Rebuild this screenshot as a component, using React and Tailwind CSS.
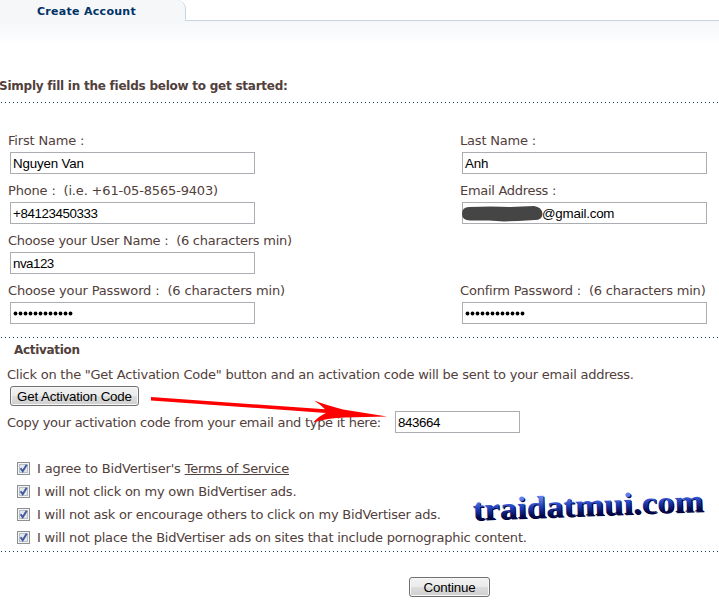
import React from 'react';

const LABEL_FONT = "font-['DejaVu_Sans',sans-serif]";

const fieldRows = [
  [
    { label: 'First Name :', value: 'Nguyen Van', tracking: 'tracking-[-0.17px]', valueTracking: 'tracking-[-0.15px]' },
    { label: 'Last Name :', value: 'Anh', tracking: 'tracking-[-0.2px]', valueTracking: 'tracking-[-0.15px]' }
  ],
  [
    { label: 'Phone :', hint: '(i.e. +61-05-8565-9403)', value: '+84123450333', tracking: 'tracking-[-0.17px]', valueTracking: 'tracking-[-0.4px]' },
    { label: 'Email Address :', value: '@gmail.com', masked: true, tracking: 'tracking-[-0.3px]', valueTracking: 'tracking-[-0.2px]' }
  ],
  [{ label: 'Choose your User Name :', hint: '(6 characters min)', value: 'nva123', tracking: 'tracking-[-0.25px]', valueTracking: 'tracking-[-0.5px]' }],
  [
    { label: 'Choose your Password :', hint: '(6 characters min)', password: true, tracking: 'tracking-[-0.15px]' },
    { label: 'Confirm Password :', hint: '(6 characters min)', password: true, tracking: 'tracking-[-0.2px]' }
  ]
];

const DottedLine = () => (
  <div className="h-px w-full bg-[repeating-linear-gradient(90deg,transparent_0_1px,#1f3a63_1px_2px,transparent_2px_4px)]" />
);

const Dots = () => (
  <svg width="62" height="20" className="block">
    {Array.from({ length: 12 }, (_, i) => (
      <circle key={i} cx={4.5 + i * 5} cy="10.5" r="1.9" fill="#000" />
    ))}
  </svg>
);

const Field = ({ label, hint, value, masked, password, tracking, valueTracking }) => (
  <div className="h-[50px] w-[452px] shrink-0">
    <div className={`h-[21px] whitespace-pre text-[13px] leading-[20px] ${tracking}`}>
      {label}
      {hint && `  ${hint}`}
    </div>
    <div className="relative ml-[2px] flex h-[22px] w-[245px] items-center border border-[#abadb3] bg-white font-['Liberation_Sans',sans-serif] text-[13.33px] text-black">
      {password ? (
        <Dots />
      ) : (
        <span className={`pt-[2px] ${masked ? 'pl-[79px]' : 'pl-[2px]'} ${valueTracking}`}>{value}</span>
      )}
      {masked && (
        <svg className="absolute -left-px top-[3px]" width="82" height="17" viewBox="0 0 82 17">
          <path d="M7 1 Q30 0 48 1 L72 0 Q80 1 80.500 8 Q80 14 73 14 L56 15 L42 15.500 L27 14.500 L8 14.500 Q0 14 0 8 Q0 1 7 1Z" fill="#454545" />
        </svg>
      )}
    </div>
  </div>
);

const PushButton = ({ children, className }) => (
  <button
    className={`flex h-[20px] items-center justify-center whitespace-nowrap rounded-[3px] border border-[#707070] bg-[linear-gradient(#f2f2f2_0%,#ebebeb_50%,#dddddd_50%,#cfcfcf_100%)] pt-[2px] font-['Liberation_Sans',sans-serif] text-[13.33px] tracking-[-0.16px] text-black shadow-[inset_0_0_0_1px_#f8f8f8] ${className}`}
  >
    {children}
  </button>
);

const Check = ({ children, tracking }) => (
  <div className="flex h-[23px] items-center">
    <svg width="13" height="13" viewBox="0 0 13 13" className="mr-[7px] shrink-0">
      <rect x="0.500" y="0.500" width="12" height="12" fill="#f4f4f4" stroke="#8e8f8f" />
      <rect x="2.500" y="2.500" width="8" height="8" fill="#e3e6ea" stroke="#b8bec6" />
      <path d="M3.600 6.300 L5.700 9.300 L9.700 2.800" fill="none" stroke="#4259a0" strokeWidth="2" />
    </svg>
    <span className={`whitespace-nowrap text-[13px] ${tracking}`}>{children}</span>
  </div>
);

const App = () => (
  <div className={`relative h-[606px] w-[719px] overflow-hidden bg-white text-[#51403b] ${LABEL_FONT}`}>
    {/* tab strip */}
    <div className="flex h-[21px]">
      <div className="h-[21px] w-[186px] rounded-tr-[9px] border-r border-[#c9d5e0] bg-[#f6f7f9] pl-[37px] text-[11px] font-bold leading-[23px] tracking-[0.29px] text-[#003366]">
        Create Account
      </div>
      <div className="h-[21px] flex-1 border-b border-[#c9d5e0]" />
    </div>
    <div className="h-[21px] bg-linear-to-b from-[#f6f7f9] to-[#fdfefe]" />

    <h1 className="-ml-px mt-[34px] h-[26px] whitespace-nowrap text-[12px] font-bold leading-[20px] tracking-[-0.24px]">
      Simply fill in the fields below to get started:
    </h1>
    <DottedLine />

    <div className="mt-[28px] pl-[8px]">
      {fieldRows.map((row, i) => (
        <div key={i} className="flex">
          {row.map((field) => (
            <Field key={field.label} {...field} />
          ))}
        </div>
      ))}
    </div>

    <div className="mt-[6px]">
      <DottedLine />
    </div>

    {/* activation */}
    <div className="h-[27px] pl-[14px] pt-[2px] text-[12px] font-bold leading-[20px] tracking-[-0.3px]">Activation</div>
    <div className="pl-[7px] text-[13px]">
      <p className="h-[21px] whitespace-nowrap leading-[20px] tracking-[-0.24px]">
        Click on the "Get Activation Code" button and an activation code will be sent to your email address.
      </p>
      <PushButton className="ml-[3px] w-[129px]">Get Activation Code</PushButton>
      <div className="mt-[5px] flex h-[22px] items-center">
        <span className="w-[388px] whitespace-nowrap pt-[2px] tracking-[-0.28px]">
          Copy your activation code from your email and type it here:
        </span>
        <span className="flex h-[22px] w-[125px] items-center border border-[#abadb3] bg-white pl-[2px] pt-[2px] font-['Liberation_Sans',sans-serif] text-[13.33px] tracking-[-0.4px] text-black">
          843664
        </span>
      </div>
    </div>

    <div className="mt-[24px] h-[94px] pl-[17px]">
      <Check tracking="tracking-[-0.17px]">
        I agree to BidVertiser's <span className="underline">Terms of Service</span>
      </Check>
      <Check tracking="tracking-[-0.25px]">I will not click on my own BidVertiser ads.</Check>
      <Check tracking="tracking-[-0.23px]">I will not ask or encourage others to click on my BidVertiser ads.</Check>
      <Check tracking="tracking-[-0.21px]">I will not place the BidVertiser ads on sites that include pornographic content.</Check>
    </div>
    <DottedLine />
    <PushButton className="ml-[409px] mt-[25px] w-[81px]">Continue</PushButton>

    {/* arrow pointing at the code input */}
    <svg className="absolute left-[140px] top-[385px]" width="260" height="45" viewBox="0 0 260 45">
      <path d="M11 12 L185 24.300 Q181 20 174 15.500 Q186 20 203 24.500 L247 31.500 L205 32.500 Q187 33 173 37.500 Q179 31 186 28 L11 15.500Z" fill="#f00" />
    </svg>

    {/* watermark */}
    <svg className="absolute left-[460px] top-[480px]" width="259" height="50" viewBox="0 0 259 50">
      <defs>
        <linearGradient id="wm" x1="0" y1="0" x2="0" y2="1">
          <stop offset="0.250" stopColor="#5c80f0" />
          <stop offset="0.500" stopColor="#1c3cb8" />
          <stop offset="0.750" stopColor="#02084a" />
        </linearGradient>
      </defs>
      <g transform="rotate(-2.200 13 40)" fontFamily="Liberation Serif, serif" fontWeight="bold" fontSize="31">
        <text x="14" y="41" textLength="231" lengthAdjust="spacingAndGlyphs" fill="#00033a">traidatmui.com</text>
        <text x="13" y="40" textLength="231" lengthAdjust="spacingAndGlyphs" fill="url(#wm)">traidatmui.com</text>
      </g>
    </svg>
  </div>
);

export default App;
